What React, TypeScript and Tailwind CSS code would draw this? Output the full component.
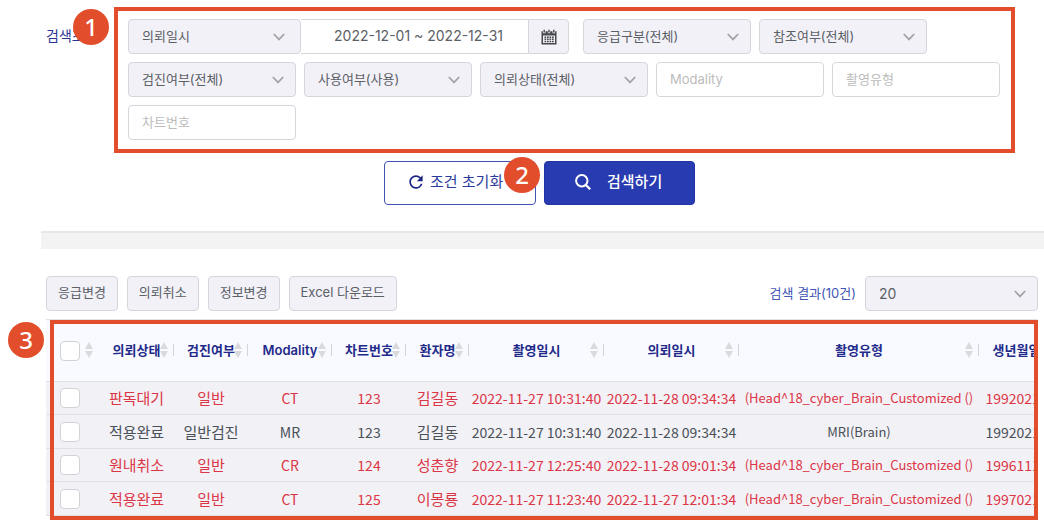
import type { ReactNode } from "react";
import { MdRefresh } from "react-icons/md";

function Badge({ children, place }: { children: ReactNode; place: string }) {
  return (
    <span
      className={`absolute z-10 flex size-9 items-center justify-center rounded-full bg-[#e24d2b] font-['Noto_Sans',sans-serif] text-2xl font-medium leading-none text-white ${place}`}
    >
      {children}
    </span>
  );
}

function Select({ label, options, width, corners = "rounded", text = "text-[13px]", chevron = "right-3" }: {
  label: string;
  options: string[];
  width: string;
  corners?: string;
  text?: string;
  chevron?: string;
}) {
  return (
    <div className={`relative h-[35px] ${width}`}>
      <select
        aria-label={label}
        className={`h-full w-full appearance-none border border-[#d3d7dc] bg-[#f2f1f7] pl-[13px] pr-8 text-[#5b6066] outline-none ${text} ${corners}`}
      >
        {options.map((o) => (
          <option key={o}>{o}</option>
        ))}
      </select>
      <svg
        viewBox="0 0 12 8"
        className={`pointer-events-none absolute top-[14px] h-2 w-3 fill-none stroke-[#a3a4a8] ${chevron}`}
        strokeWidth="1.8"
        aria-hidden="true"
      >
        <path d="M.8 1 6 6.4 11.2 1" />
      </svg>
    </div>
  );
}

function TextBox({ label }: { label: string }) {
  return (
    <input
      type="text"
      aria-label={label}
      placeholder={label}
      className="h-[35px] w-[168px] rounded border border-[#d3d7dc] bg-white px-[13px] pb-0.5 text-[13px] text-[#5b6066] outline-none placeholder:text-[#bcbcbc]"
    />
  );
}

function CalendarIcon() {
  return (
    <svg viewBox="0 0 16 16" className="size-4 fill-[#45494d]" aria-hidden="true">
      <path fillRule="evenodd" d="M.5 2.2h1.4v2h2.6v-2h2.3v2h2.4v-2h2.3v2h2.6v-2h1.4V15.5H.5ZM2 6.6V14h12V6.6Z" />
      <path d="M2.5.7h1.4v2.8H2.5zM7.3.7h1.4v2.8H7.3zM12.1.7h1.4v2.8h-1.4z" />
      <path d="M3.5 7.4h1.7V9H3.5zM6 7.4h1.7V9H6zM8.5 7.4h1.7V9H8.5zM11 7.4h1.7V9H11zM3.5 9.6h1.7v1.5H3.5zM6 9.6h1.7v1.5H6zM8.5 9.6h1.7v1.5H8.5zM11 9.6h1.7v1.5H11zM3.5 11.8h1.7v1.5H3.5zM6 11.8h1.7v1.5H6zM8.5 11.8h1.7v1.5H8.5zM11 11.8h1.7v1.5H11z" />
    </svg>
  );
}

function SortIcon() {
  return (
    <svg viewBox="0 0 8 16" className="absolute right-1.5 top-[22px] h-4 w-2 fill-[#dadadc]" aria-hidden="true">
      <path d="M4 0 8 7H0ZM0 9h8L4 16Z" />
    </svg>
  );
}

const columns = [
  { name: "의뢰상태", width: "w-[75px]", text: "text-[15px]" },
  { name: "검진여부", width: "w-[74px]", text: "text-[15px]" },
  { name: "Modality", width: "w-[84px]", text: "text-sm" },
  { name: "차트번호", width: "w-[74px]", text: "text-sm" },
  { name: "환자명", width: "w-[63px]", text: "text-[15px]" },
  { name: "촬영일시", width: "w-[135px]", text: "text-sm" },
  { name: "의뢰일시", width: "w-[135px]", text: "text-sm" },
  { name: "촬영유형", width: "w-[240px]", text: "text-[13px]" },
  { name: "생년월일", width: "w-[75px]", text: "text-sm" },
];

const head = "(Head^18_cyber_Brain_Customized ()";

const rows = [
  { urgent: true, cells: ["판독대기", "일반", "CT", "123", "김길동", "2022-11-27 10:31:40", "2022-11-28 09:34:34", head, "19920211"] },
  { urgent: false, cells: ["적용완료", "일반검진", "MR", "123", "김길동", "2022-11-27 10:31:40", "2022-11-28 09:34:34", "MRI(Brain)", "19920211"] },
  { urgent: true, cells: ["원내취소", "일반", "CR", "124", "성춘향", "2022-11-27 12:25:40", "2022-11-28 09:01:34", head, "19961111"] },
  { urgent: true, cells: ["적용완료", "일반", "CT", "125", "이몽룡", "2022-11-27 11:23:40", "2022-11-27 12:01:34", head, "19970211"] },
];

function Check({ label }: { label: string }) {
  return (
    <input
      type="checkbox"
      aria-label={label}
      className="ml-3.5 block size-5 appearance-none rounded-sm border border-[#cfd3d7] bg-white checked:bg-[#283bb0]"
    />
  );
}

export default function App() {
  return (
    <div className="overflow-hidden bg-white font-['Inter','Noto_Sans_CJK_KR',sans-serif] text-[13px] text-[#5b6066]">
      <form className="pt-[7px]" onSubmit={(e) => e.preventDefault()}>
        <div className="flex pl-[46px] pr-[29px]">
          <div className="relative w-[68px] shrink-0 pt-[19px] text-sm leading-5 text-[#283593]">
            검색조건
            <Badge place="left-[27px] top-0.5">1</Badge>
          </div>
          <div className="flex flex-1 flex-wrap gap-2 border-4 border-[#e24d2b] py-2 pl-2.5 pr-2 pb-[9px]">
            <div className="mr-1.5 flex">
              <Select
                label="날짜 기준"
                options={["의뢰일시", "촬영일시"]}
                width="w-[173px]"
                corners="rounded-l rounded-r-sm"
                chevron="right-4"
              />
              <input
                type="text"
                aria-label="기간"
                defaultValue="2022-12-01 ~ 2022-12-31"
                className="h-[35px] w-[227px] border-y border-[#d3d7dc] bg-white pb-0.5 pl-4 pr-2 text-center text-sm outline-none"
              />
              <button
                type="button"
                aria-label="달력"
                className="flex h-[35px] w-[41px] items-center justify-center rounded-r border border-[#d3d7dc] bg-[#f2f1f7]"
              >
                <CalendarIcon />
              </button>
            </div>
            <Select label="응급구분" options={["응급구분(전체)"]} width="w-[168px]" />
            <Select label="참조여부" options={["참조여부(전체)"]} width="w-[168px]" />
            <Select label="검진여부" options={["검진여부(전체)"]} width="w-[168px]" />
            <Select label="사용여부" options={["사용여부(사용)"]} width="w-[168px]" />
            <Select label="의뢰상태" options={["의뢰상태(전체)"]} width="w-[168px]" />
            <TextBox label="Modality" />
            <TextBox label="촬영유형" />
            <TextBox label="차트번호" />
          </div>
        </div>

        <div className="mt-2 flex justify-center gap-2 pb-[26px] pl-[41px] pr-1.5">
          <div className="relative">
            <button
              type="reset"
              className="flex h-11 w-[152px] items-center gap-1 rounded border border-[#4353b5] bg-white pb-0.5 pl-[21px] text-[15px] text-[#2b3b9b]"
            >
              <MdRefresh className="size-5 text-[#1a2584]" aria-hidden="true" />
              조건 초기화
            </button>
            <Badge place="-right-1 -top-1">2</Badge>
          </div>
          <button
            type="submit"
            className="flex h-11 w-[151px] items-center gap-4 rounded border border-[#2234a4] bg-[#283bb0] pb-0.5 pl-[30px] text-[15px] font-medium text-white"
          >
            <svg viewBox="0 0 16 16" className="size-4 fill-none stroke-white" strokeWidth="2" aria-hidden="true">
              <circle cx="6.8" cy="6.8" r="5.7" />
              <path d="m10.9 11 4.3 4.3" strokeWidth="2.3" />
            </svg>
            검색하기
          </button>
        </div>
      </form>

      <div className="ml-[41px] h-[18px] border-t-2 border-[#e6e7ea] bg-[#f3f3f4]" />

      <section className="pb-1 pl-[46px] pr-1.5 pt-[27px]">
        <div className="flex items-center gap-[9px]">
          {["응급변경", "의뢰취소", "정보변경", "Excel 다운로드"].map((name) => (
            <button
              key={name}
              type="button"
              className="h-[35px] whitespace-nowrap rounded border border-[#d3d7dc] bg-[#f2f1f7] px-[11px] pb-0.5"
            >
              {name}
            </button>
          ))}
          <span className="ml-auto text-[#4256b5]">검색 결과(10건)</span>
          <Select label="표시 개수" options={["20", "50", "100"]} width="w-[173px]" text="text-sm" />
        </div>

        <div className="relative mt-2">
          <div className="overflow-hidden border-t border-[#e2e3e8]">
            <table className="w-full min-w-[1008px] table-fixed border-separate border-spacing-0">
              <thead>
                <tr className="h-[62px] bg-[#f9faff] text-[#1f2a8a]">
                  <th className="relative w-[53px] border-b border-[#dfe1e5] p-0">
                    <Check label="전체 선택" />
                    <SortIcon />
                  </th>
                  {columns.map((c) => (
                    <th key={c.name} className={`relative whitespace-nowrap border-b border-[#dfe1e5] p-0 font-semibold ${c.width}`}>
                      {c.name}
                      <SortIcon />
                      <span className="absolute right-0 top-6 h-3 w-px bg-[#d4d5d9]" />
                    </th>
                  ))}
                </tr>
              </thead>
              <tbody>
                {rows.map((r, i) => (
                  <tr
                    key={i}
                    className={`bg-[#f2f1f6] odd:h-[33px] even:h-[34px] ${r.urgent ? "text-[#dc3545]" : "text-[#495057]"}`}
                  >
                    <td className="border-b border-[#dfe1e5] p-0">
                      <Check label={`${r.cells[4]} 선택`} />
                    </td>
                    {r.cells.map((cell, j) => (
                      <td
                        key={j}
                        className={`whitespace-nowrap border-b border-[#dfe1e5] p-0 text-center font-['Noto_Sans_CJK_KR',sans-serif] leading-5 ${columns[j].text}`}
                      >
                        {cell}
                      </td>
                    ))}
                  </tr>
                ))}
              </tbody>
            </table>
          </div>
          <div className="pointer-events-none absolute -bottom-1 left-1 right-0 top-px border-4 border-[#e24d2b]" />
          <Badge place="-left-[38px] top-[3px]">3</Badge>
        </div>
      </section>
    </div>
  );
}
